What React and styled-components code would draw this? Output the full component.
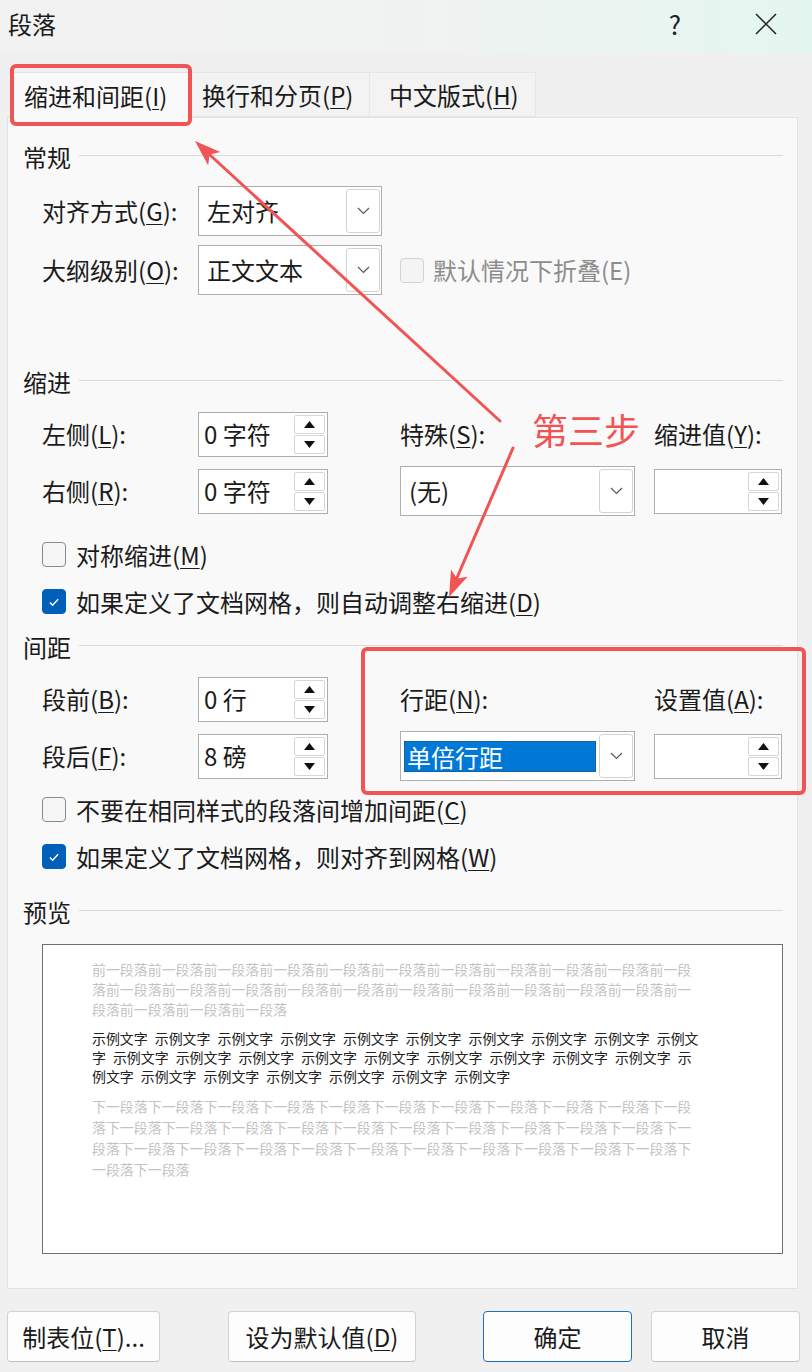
import React from 'react';
import styled, { createGlobalStyle, css } from 'styled-components';

const RED = '#f05454';

const GlobalStyle = createGlobalStyle`
  *, *::before, *::after { box-sizing: border-box; }
  html, body { margin: 0; padding: 0; background: #f0f0f0; }
  body { font-family: "Noto Sans CJK SC", "Noto Sans", sans-serif; }
`;

const Dialog = styled.div`
  position: relative;
  width: 812px;
  height: 1372px;
  background: #f0f0f0;
  display: flex;
  flex-direction: column;
  font-family: "Noto Sans CJK SC", "Noto Sans", sans-serif;
  font-size: 24px;
  color: #1b1b1b;
  overflow: hidden;
`;

const TitleBar = styled.header`
  height: 53px;
  flex: none;
  display: flex;
  align-items: center;
  padding: 0 16px 6px 8px;
  background: linear-gradient(90deg, #f2f2f2 0%, #f1f2f2 45%, #e4f6f0 100%);
`;

const TitleText = styled.h1`
  margin: 0;
  flex: 1;
  font-size: 24px;
  font-weight: 400;
  line-height: 30px;
`;

const TitleButton = styled.span`
  width: 60px;
  height: 40px;
  display: flex;
  align-items: center;
  justify-content: center;
  font-size: 26px;
  color: #222;
  & + & { margin-left: 31px; }
`;

const TabStrip = styled.nav`
  margin-top: 19px;
  height: 45px;
  flex: none;
  display: flex;
  padding-left: 10px;
  position: relative;
  z-index: 1;
`;

const Tab = styled.div`
  width: ${p => p.$w}px;
  height: 45px;
  padding-left: ${p => p.$pl}px;
  display: flex;
  align-items: center;
  white-space: nowrap;
  line-height: 30px;
  background: #f3f3f3;
  border: 1px solid #e6e6e6;
  border-left: 0;
  ${p => p.$active && css`
    height: 46px;
    background: #f9f9f9;
    border: 1px solid #e2e2e2;
    border-bottom: 0;
  `}
`;

const Panel = styled.main`
  margin: 0 14px 0 7px;
  height: 1172px;
  flex: none;
  background: #f9f9f9;
  border: 1px solid #e2e2e2;
  padding: 24px 14px 0 15px;
  display: flex;
  flex-direction: column;
`;

const SectionHeader = styled.div`
  height: 30px;
  display: flex;
  align-items: center;
  line-height: 30px;
  margin-top: ${p => p.$mt || 0}px;
  &::after {
    content: '';
    flex: 1;
    height: 1px;
    margin: -3px 0 0 8px;
    background: #dadada;
  }
`;

const FieldGrid = styled.div`
  margin: 14px 0 0 19px;
  display: grid;
  grid-template-columns: 156px 202px 254px 128px;
  grid-template-rows: ${p => p.$rows};
  row-gap: 9px;
  align-items: center;
`;

const FieldLabel = styled.span`
  white-space: nowrap;
  line-height: 30px;
  color: ${p => (p.$disabled ? '#8c8c8c' : 'inherit')};
`;

const Acc = styled.u`
  text-decoration-thickness: 1px;
  text-underline-offset: 3px;
`;

const Combo = styled.div`
  width: ${p => p.$w}px;
  height: 50px;
  display: flex;
  background: #fff;
  border: 1px solid #aeaeae;
`;

const ComboValue = styled.span`
  flex: 1;
  display: flex;
  align-items: center;
  padding-left: 8px;
  line-height: 30px;
  white-space: nowrap;
  ${p => p.$selected && css`
    margin: 9px 3px 8px 3px;
    padding-left: 3px;
    background: #0078d7;
    color: #fff;
    outline: 1px dotted #2a4a70;
    outline-offset: -1px;
  `}
`;

const ComboButton = styled.span`
  width: 34px;
  margin: 2px 1px 2px 0;
  border: 1px solid #d3d3d3;
  border-radius: 3px;
  background: #fff;
  display: flex;
  align-items: center;
  justify-content: center;
`;

const Spin = styled.div`
  width: ${p => p.$w}px;
  height: 45px;
  display: flex;
  background: #fff;
  border: 1px solid #aeaeae;
`;

const SpinValue = styled.span`
  flex: 1;
  display: flex;
  align-items: center;
  padding-left: 5px;
  line-height: 30px;
  white-space: nowrap;
`;

const SpinButtons = styled.span`
  width: 31px;
  margin: 2px 2px 2px 0;
  display: flex;
  flex-direction: column;
  gap: 1px;
`;

const SpinButton = styled.span`
  flex: 1;
  border: 1px solid #d6d6d6;
  border-radius: 2px;
  background: #fff;
  display: flex;
  align-items: center;
  justify-content: center;
`;

const CheckRow = styled.label`
  height: 47px;
  margin: ${p => p.$mt || 0}px 0 0 ${p => (p.$inline ? 0 : 19)}px;
  display: flex;
  align-items: center;
  gap: ${p => (p.$inline ? 9 : 10)}px;
  line-height: 30px;
  white-space: nowrap;
  color: ${p => (p.$disabled ? '#8c8c8c' : 'inherit')};
`;

const Box = styled.span`
  width: 24px;
  height: 25px;
  flex: none;
  border-radius: 4px;
  display: flex;
  align-items: center;
  justify-content: center;
  ${p =>
    p.$checked
      ? css`background: #005fb8; border: 1px solid #005fb8;`
      : p.$disabled
      ? css`background: #f4f4f4; border: 1px solid #d2d2d2;`
      : css`background: #f6f6f6; border: 1px solid #8a8a8a;`}
`;

const PreviewBox = styled.div`
  margin: 17px 0 0 19px;
  width: 741px;
  height: 310px;
  background: #fff;
  border: 1px solid #707070;
  padding: 14px 0 0 49px;
  font-size: 13.95px;
`;

const PreviewPara = styled.div`
  color: ${p => (p.$sample ? '#222' : '#c3c3c3')};
  line-height: ${p => p.$lh}px;
  margin-top: ${p => p.$mt || 0}px;
`;

const PreviewLine = styled.div`
  display: flex;
  gap: 7px;
  white-space: nowrap;
`;

const ButtonBar = styled.footer`
  margin-top: 22px;
  height: 51px;
  flex: none;
  display: flex;
  padding-left: 7px;
`;

const Button = styled.button`
  width: ${p => p.$w}px;
  margin-left: ${p => p.$ml || 0}px;
  height: 51px;
  padding: 0;
  font: inherit;
  font-size: 24px;
  line-height: 30px;
  color: #1b1b1b;
  background: #fdfdfd;
  border: 1px solid ${p => (p.$primary ? '#1f6fbf' : '#d2d2d2')};
  border-bottom-color: ${p => (p.$primary ? '#1f6fbf' : '#c2c2c2')};
  border-radius: 4px;
  white-space: nowrap;
`;

const Overlay = styled.svg`
  position: absolute;
  left: 0;
  top: 0;
  pointer-events: none;
  z-index: 5;
`;

const StepNote = styled.span`
  position: absolute;
  left: 532px;
  top: 411px;
  font-size: 36px;
  line-height: 36px;
  color: ${RED};
  z-index: 5;
  white-space: nowrap;
`;

const Chevron = () => (
  <svg width="13" height="8" viewBox="0 0 13 8">
    <polyline points="1,1 6.5,6.5 12,1" fill="none" stroke="#5a5a5a" strokeWidth="1.2" />
  </svg>
);

const TriUp = () => (
  <svg width="11" height="7" viewBox="0 0 11 7">
    <polygon points="5.5,0 11,7 0,7" fill="#111" />
  </svg>
);

const TriDown = () => (
  <svg width="11" height="7" viewBox="0 0 11 7">
    <polygon points="0,0 11,0 5.5,7" fill="#111" />
  </svg>
);

const Check = () => (
  <svg width="24" height="24" viewBox="0 0 24 24">
    <polyline points="7.5,12.5 10.5,15.5 16.5,9" fill="none" stroke="#fff" strokeWidth="1.6" />
  </svg>
);

const ComboBox = ({ w, value, selected }) => (
  <Combo $w={w}>
    <ComboValue $selected={selected}>{value}</ComboValue>
    <ComboButton><Chevron /></ComboButton>
  </Combo>
);

const SpinBox = ({ w, value }) => (
  <Spin $w={w}>
    <SpinValue>{value}</SpinValue>
    <SpinButtons>
      <SpinButton><TriUp /></SpinButton>
      <SpinButton><TriDown /></SpinButton>
    </SpinButtons>
  </Spin>
);

const CheckBox = ({ checked, disabled, children, mt, inline }) => (
  <CheckRow $mt={mt} $disabled={disabled} $inline={inline}>
    <Box $checked={checked} $disabled={disabled}>{checked && <Check />}</Box>
    <span>{children}</span>
  </CheckRow>
);

const prevText = '前一段落'.repeat(25);
const prevLines = [prevText.slice(0, 43), prevText.slice(43, 86), prevText.slice(86)];
const nextText = '下一段落'.repeat(34);
const nextLines = [nextText.slice(0, 43), nextText.slice(43, 86), nextText.slice(86, 129), nextText.slice(129)];
const unit = '示例文字';
const sampleLines = [
  [...Array(9).fill(unit), '示例文'],
  ['字', ...Array(9).fill(unit), '示'],
  ['例文字', ...Array(6).fill(unit)],
];

export default function App() {
  return (
    <>
      <GlobalStyle />
      <Dialog>
        <TitleBar>
          <TitleText>段落</TitleText>
          <TitleButton>?</TitleButton>
          <TitleButton>
            <svg width="22" height="22" viewBox="0 0 22 22">
              <path d="M1 1 L21 21 M21 1 L1 21" stroke="#222" strokeWidth="1.5" fill="none" />
            </svg>
          </TitleButton>
        </TitleBar>

        <TabStrip>
          <Tab $w={181} $pl={13} $active>缩进和间距(<Acc>I</Acc>)</Tab>
          <Tab $w={179} $pl={11}>换行和分页(<Acc>P</Acc>)</Tab>
          <Tab $w={166} $pl={19}>中文版式(<Acc>H</Acc>)</Tab>
        </TabStrip>

        <Panel>
          <SectionHeader>常规</SectionHeader>
          <FieldGrid $rows="50px 50px">
            <FieldLabel>对齐方式(<Acc>G</Acc>):</FieldLabel>
            <ComboBox w={184} value="左对齐" />
            <span />
            <span />
            <FieldLabel>大纲级别(<Acc>O</Acc>):</FieldLabel>
            <ComboBox w={184} value="正文文本" />
            <CheckBox disabled inline>默认情况下折叠(E)</CheckBox>
            <span />
          </FieldGrid>

          <SectionHeader $mt={72}>缩进</SectionHeader>
          <FieldGrid $rows="46px 50px">
            <FieldLabel>左侧(<Acc>L</Acc>):</FieldLabel>
            <SpinBox w={130} value="0 字符" />
            <FieldLabel>特殊(<Acc>S</Acc>):</FieldLabel>
            <FieldLabel>缩进值(<Acc>Y</Acc>):</FieldLabel>
            <FieldLabel>右侧(<Acc>R</Acc>):</FieldLabel>
            <SpinBox w={130} value="0 字符" />
            <ComboBox w={235} value="(无)" />
            <SpinBox w={128} value="" />
          </FieldGrid>
          <CheckBox mt={15}>对称缩进(<Acc>M</Acc>)</CheckBox>
          <CheckBox checked>如果定义了文档网格，则自动调整右缩进(<Acc>D</Acc>)</CheckBox>

          <SectionHeader $mt={7}>间距</SectionHeader>
          <FieldGrid $rows="46px 50px">
            <FieldLabel>段前(<Acc>B</Acc>):</FieldLabel>
            <SpinBox w={130} value="0 行" />
            <FieldLabel>行距(<Acc>N</Acc>):</FieldLabel>
            <FieldLabel>设置值(<Acc>A</Acc>):</FieldLabel>
            <FieldLabel>段后(<Acc>F</Acc>):</FieldLabel>
            <SpinBox w={130} value="8 磅" />
            <ComboBox w={235} value="单倍行距" selected />
            <SpinBox w={128} value="" />
          </FieldGrid>
          <CheckBox mt={5}>不要在相同样式的段落间增加间距(<Acc>C</Acc>)</CheckBox>
          <CheckBox checked>如果定义了文档网格，则对齐到网格(<Acc>W</Acc>)</CheckBox>

          <SectionHeader $mt={17}>预览</SectionHeader>
          <PreviewBox>
            <PreviewPara $lh={20}>
              {prevLines.map((l, i) => <PreviewLine key={i}>{l}</PreviewLine>)}
            </PreviewPara>
            <PreviewPara $lh={19} $mt={10} $sample>
              {sampleLines.map((segs, i) => (
                <PreviewLine key={i}>
                  {segs.map((s, j) => <span key={j}>{s}</span>)}
                </PreviewLine>
              ))}
            </PreviewPara>
            <PreviewPara $lh={21} $mt={10}>
              {nextLines.map((l, i) => <PreviewLine key={i}>{l}</PreviewLine>)}
            </PreviewPara>
          </PreviewBox>
        </Panel>

        <ButtonBar>
          <Button $w={153}>制表位(<Acc>T</Acc>)...</Button>
          <Button $w={188} $ml={68}>设为默认值(<Acc>D</Acc>)</Button>
          <Button $w={149} $ml={67} $primary>确定</Button>
          <Button $w={149} $ml={19}>取消</Button>
        </ButtonBar>

        <Overlay width="812" height="1372" viewBox="0 0 812 1372">
          <rect x="12" y="66" width="178" height="58" rx="4" fill="none" stroke={RED} strokeWidth="4" />
          <rect x="363" y="649" width="441" height="144" rx="4" fill="none" stroke={RED} strokeWidth="4" />
          <line x1="500" y1="421" x2="210" y2="155" stroke={RED} strokeWidth="3" strokeLinecap="round" />
          <polygon points="195,141 220.3,152 209.7,154.5 208.1,165.2" fill={RED} />
          <line x1="513" y1="448" x2="456" y2="580" stroke={RED} strokeWidth="3" strokeLinecap="round" />
          <polygon points="449,597 451,569.5 456.9,578.6 467.6,576.7" fill={RED} />
        </Overlay>
        <StepNote>第三步</StepNote>
      </Dialog>
    </>
  );
}
